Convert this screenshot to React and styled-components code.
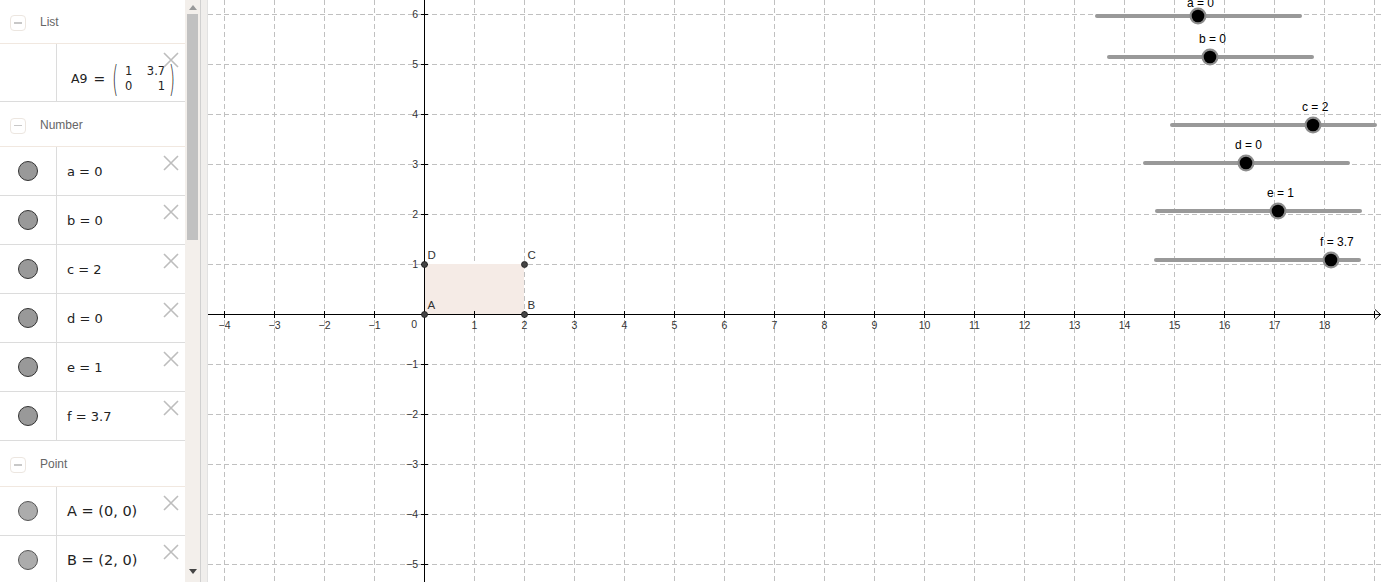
import React from 'react'
import styled, { createGlobalStyle } from 'styled-components'

const GlobalStyle = createGlobalStyle`
  html, body { margin: 0; padding: 0; background: #fff; overflow: hidden; }
  * { box-sizing: border-box; }
`

const ORIGIN_X = 424
const ORIGIN_Y = 314
const UNIT = 50

const numbers = [
  { name: 'a', value: '0' },
  { name: 'b', value: '0' },
  { name: 'c', value: '2' },
  { name: 'd', value: '0' },
  { name: 'e', value: '1' },
  { name: 'f', value: '3.7' },
]

const points = [
  { name: 'A', value: '(0, 0)' },
  { name: 'B', value: '(2, 0)' },
]

// labelY: baseline of the label (the top one is pushed against the edge)
const sliders = [
  { label: 'a = 0', y: 16, x1: 1097, x2: 1300, knob: 1198, labelY: 7 },
  { label: 'b = 0', y: 57, x1: 1109, x2: 1312, knob: 1210 },
  { label: 'c = 2', y: 125, x1: 1172, x2: 1375, knob: 1313 },
  { label: 'd = 0', y: 163, x1: 1145, x2: 1348, knob: 1246 },
  { label: 'e = 1', y: 211, x1: 1157, x2: 1360, knob: 1278 },
  { label: 'f = 3.7', y: 260, x1: 1156, x2: 1359, knob: 1331 },
]

const graphPoints = [
  { name: 'A', x: 0, y: 0 },
  { name: 'B', x: 2, y: 0 },
  { name: 'C', x: 2, y: 1 },
  { name: 'D', x: 0, y: 1 },
]

function DeleteIcon() {
  return (
    <DeleteBtn>
      <svg width="16" height="16" viewBox="0 0 16 16">
        <path d="M1 1 L15 15 M15 1 L1 15" stroke="#bdbdbd" strokeWidth="1.6" fill="none" />
      </svg>
    </DeleteBtn>
  )
}

function GroupHeader({ title, h }) {
  return (
    <Header h={h}>
      <Collapse>
        <span />
      </Collapse>
      <HeaderTitle>{title}</HeaderTitle>
    </Header>
  )
}

function Graph() {
  const xs = []
  for (let k = -4; k <= 19; k++) xs.push(k)
  const ys = []
  for (let k = -5; k <= 6; k++) ys.push(k)
  const px = (u) => ORIGIN_X + u * UNIT
  const py = (u) => ORIGIN_Y - u * UNIT

  return (
    <svg width="100%" height="100%" viewBox="208 0 1174 582" preserveAspectRatio="xMinYMin slice">
      <g stroke="#c0c0c0" strokeWidth="1" strokeDasharray="5 3">
        {xs.filter((k) => k !== 0).map((k) => (
          <line key={'gx' + k} x1={px(k) + 0.5} y1={0} x2={px(k) + 0.5} y2={582} />
        ))}
        {ys.filter((k) => k !== 0).map((k) => (
          <line key={'gy' + k} x1={208} y1={py(k) + 0.5} x2={1382} y2={py(k) + 0.5} />
        ))}
      </g>

      <rect x={px(0)} y={py(1)} width={UNIT * 2} height={UNIT} fill="#f5ebe6" />

      <g stroke="#000" strokeWidth="1">
        <line x1={208} y1={ORIGIN_Y + 0.5} x2={1381} y2={ORIGIN_Y + 0.5} />
        <line x1={ORIGIN_X + 0.5} y1={0} x2={ORIGIN_X + 0.5} y2={582} />
        <polyline points={`1375,309.5 1380.5,314.5 1375,319.5`} fill="none" />
        {xs.filter((k) => k !== 0).map((k) => (
          <line key={'tx' + k} x1={px(k) + 0.5} y1={ORIGIN_Y - 3} x2={px(k) + 0.5} y2={ORIGIN_Y + 4} />
        ))}
        {ys.filter((k) => k !== 0).map((k) => (
          <line key={'ty' + k} x1={ORIGIN_X - 3} y1={py(k) + 0.5} x2={ORIGIN_X + 4} y2={py(k) + 0.5} />
        ))}
      </g>

      <g fontFamily="'Liberation Sans', Arial, sans-serif" fontSize="10.5" fill="#333">
        {xs.filter((k) => k !== 0 && k <= 18).map((k) => (
          <text key={'lx' + k} x={px(k) + 0.5} y={ORIGIN_Y + 15} textAnchor="middle">
            {k < 0 ? '\u2212' + Math.abs(k) : k}
          </text>
        ))}
        <text x={ORIGIN_X - 7} y={ORIGIN_Y + 14} textAnchor="end">0</text>
        {ys.filter((k) => k !== 0).map((k) => (
          <text key={'ly' + k} x={ORIGIN_X - 6} y={py(k) + 4} textAnchor="end">
            {k < 0 ? '\u2212' + Math.abs(k) : k}
          </text>
        ))}
      </g>

      {graphPoints.map((p) => (
        <g key={p.name}>
          <circle cx={px(p.x) + 0.5} cy={py(p.y) + 0.5} r="3" fill="#444" stroke="#1a1a1a" strokeWidth="0.8" />
          <text
            x={px(p.x) + 3.5}
            y={py(p.y) - 5}
            fontFamily="'Liberation Sans', Arial, sans-serif"
            fontSize="11.5"
            fill="#333"
          >
            {p.name}
          </text>
        </g>
      ))}

      {sliders.map((s) => (
        <g key={s.label}>
          <line x1={s.x1} y1={s.y} x2={s.x2} y2={s.y} stroke="#999" strokeWidth="4" strokeLinecap="round" />
          <circle cx={s.knob} cy={s.y} r="8.5" fill="#8c8c8c" />
          <circle cx={s.knob} cy={s.y} r="6.3" fill="#000" />
          <text
            x={s.knob - 11}
            y={s.labelY ?? s.y - 14}
            fontFamily="'Liberation Sans', Arial, sans-serif"
            fontSize="12"
            fill="#000"
          >
            {s.label}
          </text>
        </g>
      ))}
    </svg>
  )
}

export default function App() {
  return (
    <>
      <GlobalStyle />
      <Page>
        <AlgebraPanel>
          <GroupHeader title="List" h={44} />
          <Row h={58}>
            <MarbleCell />
            <MatrixCell>
              <span>A9</span>
              <Eq>=</Eq>
              <Paren>(</Paren>
              <Matrix>
                <span>1</span>
                <span>3.7</span>
                <span>0</span>
                <span>1</span>
              </Matrix>
              <Paren>)</Paren>
            </MatrixCell>
            <DeleteIcon />
          </Row>

          <GroupHeader title="Number" h={45} />
          {numbers.map((n) => (
            <Row key={n.name} h={49}>
              <MarbleCell>
                <Marble />
              </MarbleCell>
              <Formula>
                {n.name} = {n.value}
              </Formula>
              <DeleteIcon />
            </Row>
          ))}

          <GroupHeader title="Point" h={46} />
          {points.map((p) => (
            <Row key={p.name} h={49}>
              <MarbleCell>
                <Marble light />
              </MarbleCell>
              <Formula big>
                {p.name} = {p.value}
              </Formula>
              <DeleteIcon />
            </Row>
          ))}
        </AlgebraPanel>

        <Scrollbar>
          <Arrow />
          <Thumb />
          <Track />
          <Arrow down />
        </Scrollbar>

        <Splitter />

        <Canvas>
          <Graph />
        </Canvas>
      </Page>
    </>
  )
}

const Page = styled.div`
  display: flex;
  width: 1382px;
  height: 582px;
  overflow: hidden;
  background: #fff;
`

const AlgebraPanel = styled.div`
  width: 185px;
  flex-shrink: 0;
  display: flex;
  flex-direction: column;
  overflow: hidden;
  background: #fff;
`

const Header = styled.div`
  height: ${(p) => p.h}px;
  flex-shrink: 0;
  display: flex;
  align-items: center;
  padding: 3px 0 0 10px;
  border-bottom: 1px solid #f1e8e0;
`

const Collapse = styled.div`
  width: 16px;
  height: 16px;
  border: 1px solid #ece6e0;
  border-radius: 4px;
  display: flex;
  align-items: center;
  justify-content: center;
  span {
    width: 8px;
    height: 1.5px;
    background: #c8c8c8;
  }
`

const HeaderTitle = styled.div`
  margin-left: 14px;
  margin-bottom: 2px;
  font-family: 'Liberation Sans', Arial, sans-serif;
  font-size: 12px;
  color: #666;
`

const Row = styled.div`
  position: relative;
  height: ${(p) => p.h}px;
  flex-shrink: 0;
  display: flex;
  align-items: stretch;
  border-bottom: 1px solid #dcdcdc;
`

const MarbleCell = styled.div`
  width: 57px;
  flex-shrink: 0;
  border-right: 1px solid #dcdcdc;
  display: flex;
  align-items: center;
  justify-content: center;
`

const Marble = styled.div`
  width: 20px;
  height: 20px;
  border-radius: 50%;
  background: ${(p) => (p.light ? '#acacac' : '#999')};
  border: 1px solid ${(p) => (p.light ? '#555' : '#333')};
`

const Formula = styled.div`
  display: flex;
  align-items: center;
  padding-left: 10px;
  font-family: 'DejaVu Sans', sans-serif;
  font-size: ${(p) => (p.big ? '14.5px' : '13px')};
  color: #222;
  white-space: pre;
`

const MatrixCell = styled.div`
  display: flex;
  align-items: center;
  padding-left: 14px;
  padding-top: 12px;
  font-family: 'DejaVu Sans', sans-serif;
  font-size: 12.5px;
  color: #222;
`

const Eq = styled.span`
  margin: 0 7px 0 6px;
  font-size: 14px;
`

const Paren = styled.span`
  display: inline-block;
  font-size: 15px;
  font-weight: 300;
  transform: scaleY(2.4);
  color: #222;
`

const Matrix = styled.div`
  display: grid;
  grid-template-columns: 14px 22px;
  column-gap: 4px;
  row-gap: 1px;
  margin: 0 4px 0 7px;
  font-size: 11.5px;
  line-height: 14px;
  span:nth-child(even) {
    text-align: right;
  }
`

const DeleteBtn = styled.div`
  position: absolute;
  top: 8px;
  right: 6px;
  width: 16px;
  height: 16px;
  display: flex;
`

const Scrollbar = styled.div`
  width: 15px;
  flex-shrink: 0;
  display: flex;
  flex-direction: column;
  align-items: center;
  background: #f3efeb;
`

const Arrow = styled.div`
  width: 0;
  height: 0;
  margin: ${(p) => (p.down ? '0 0 8px' : '5px 0 4px')};
  border-left: 4px solid transparent;
  border-right: 4px solid transparent;
  ${(p) => (p.down ? 'border-top: 5px solid #444;' : 'border-bottom: 5px solid #999;')}
`

const Thumb = styled.div`
  width: 11px;
  height: 226px;
  background: #c1c1c1;
`

const Track = styled.div`
  flex: 1;
`

const Splitter = styled.div`
  width: 8px;
  flex-shrink: 0;
  background: #f0eeec;
  border-left: 1px solid #d0d0d0;
  border-right: 1px solid #e2e2e2;
`

const Canvas = styled.div`
  flex: 1;
  height: 582px;
  overflow: hidden;
  svg {
    display: block;
  }
`
